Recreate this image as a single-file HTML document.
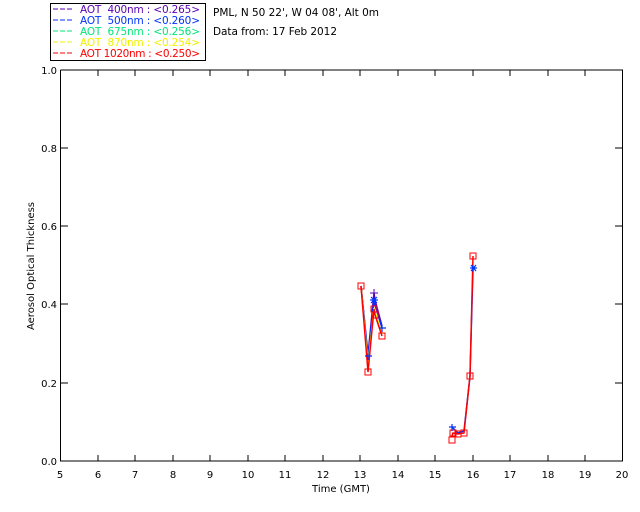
<!DOCTYPE html>
<html><head><style>
body{margin:0;background:#fff;width:640px;height:512px;overflow:hidden}
svg{display:block;font-family:"DejaVu Sans","Liberation Sans",sans-serif}
</style></head><body>
<svg width="640" height="512" viewBox="0 0 640 512" font-size="10">
<rect width="640" height="512" fill="#fff"/>
<rect x="50.5" y="3.5" width="155" height="57" fill="none" stroke="#000"/>
<g font-size="10.5">
<line x1="53" y1="9" x2="74" y2="9" stroke="#5a00b4" stroke-dasharray="5,2"/><text x="80" y="13" fill="#5a00b4" textLength="120" xml:space="preserve">AOT  400nm : &lt;0.265&gt;</text>
<line x1="53" y1="20" x2="74" y2="20" stroke="#0032ff" stroke-dasharray="5,2"/><text x="80" y="24" fill="#0032ff" textLength="120" xml:space="preserve">AOT  500nm : &lt;0.260&gt;</text>
<line x1="53" y1="31" x2="74" y2="31" stroke="#00e678" stroke-dasharray="5,2"/><text x="80" y="35" fill="#00e678" textLength="120" xml:space="preserve">AOT  675nm : &lt;0.256&gt;</text>
<line x1="53" y1="42" x2="74" y2="42" stroke="#f0f000" stroke-dasharray="5,2"/><text x="80" y="46" fill="#f0f000" textLength="120" xml:space="preserve">AOT  870nm : &lt;0.254&gt;</text>
<line x1="53" y1="53" x2="74" y2="53" stroke="#ff0000" stroke-dasharray="5,2"/><text x="80" y="57" fill="#ff0000" textLength="120" xml:space="preserve">AOT 1020nm : &lt;0.250&gt;</text>
</g>
<text x="213" y="16" font-size="10.5" textLength="166">PML, N 50 22', W 04 08', Alt 0m</text>
<text x="213" y="35" font-size="10.5" textLength="124">Data from: 17 Feb 2012</text>
<g stroke="#000" fill="none">
<polyline points="60.5,70 60.5,461 622.5,461 622.5,70 60.5,70"/>
<path d="M98,461v-6M135,461v-6M173,461v-6M210,461v-6M248,461v-6M285,461v-6M323,461v-6M360,461v-6M398,461v-6M435,461v-6M473,461v-6M510,461v-6M548,461v-6M585,461v-6
M98,70v6M135,70v6M173,70v6M210,70v6M248,70v6M285,70v6M323,70v6M360,70v6M398,70v6M435,70v6M473,70v6M510,70v6M548,70v6M585,70v6
M60,383h8M60,304h8M60,226h8M60,148h8M623,383h-8M623,304h-8M623,226h-8M623,148h-8"/>
</g>
<g text-anchor="middle" font-size="10">
<text x="60" y="478">5</text><text x="98" y="478">6</text><text x="135" y="478">7</text><text x="173" y="478">8</text><text x="210" y="478">9</text><text x="248" y="478">10</text><text x="285" y="478">11</text><text x="323" y="478">12</text><text x="360" y="478">13</text><text x="398" y="478">14</text><text x="435" y="478">15</text><text x="473" y="478">16</text><text x="510" y="478">17</text><text x="548" y="478">18</text><text x="585" y="478">19</text><text x="622" y="478">20</text>
</g>
<g text-anchor="end" font-size="10">
<text x="57" y="465">0.0</text><text x="57" y="387">0.2</text><text x="57" y="308">0.4</text><text x="57" y="230">0.6</text><text x="57" y="152">0.8</text><text x="57" y="74">1.0</text>
</g>
<text x="341" y="492" text-anchor="middle" font-size="10">Time (GMT)</text>
<text transform="translate(34,266) rotate(-90)" text-anchor="middle" font-size="10">Aerosol Optical Thickness</text>
<g fill="none" stroke-width="1.5">
<polyline stroke="#5a00b4" points="361,286 368,355 374,293 375,300 382,326"/>
<polyline stroke="#0032ff" points="361,286 368,357 374,300 375,305 382,328"/>
<polyline stroke="#0032ff" points="452,427 458,433 464,431 470,376 473,268"/>
<polyline stroke="#f0f000" points="361,286 368,365 374,308 375,312 382,334"/>
<polyline stroke="#ff0000" points="361,286 368,372 374,309 375,315 382,336"/>
<polyline stroke="#ff0000" points="452,436 453,433 458,434 464,433 470,376 473,256"/>
</g>
<g fill="none" stroke="#ff0000">
<rect x="358" y="283" width="6" height="6"/><rect x="365" y="369" width="6" height="6"/><rect x="371" y="306" width="6" height="6"/><rect x="372" y="312" width="6" height="6"/><rect x="379" y="333" width="6" height="6"/>
<rect x="449" y="437" width="6" height="6"/><rect x="450" y="430" width="6" height="6"/><rect x="455" y="431" width="6" height="6"/><rect x="461" y="430" width="6" height="6"/><rect x="467" y="373" width="6" height="6"/><rect x="470" y="253" width="6" height="6"/>
</g>
<g stroke="#0032ff" stroke-width="1.2">
<path d="M370,300h8M374,296v8M371,297l6,6M377,297l-6,6M379,328h7M382,325v7M365,356h7M368,353v7M449,427h7M452,424v7M470,268h7M473,265v7M471,265l5,6M476,265l-5,6"/>
</g>
<path d="M374,289v8M370,293h8" stroke="#5a00b4"/>
</svg>
</body></html>
